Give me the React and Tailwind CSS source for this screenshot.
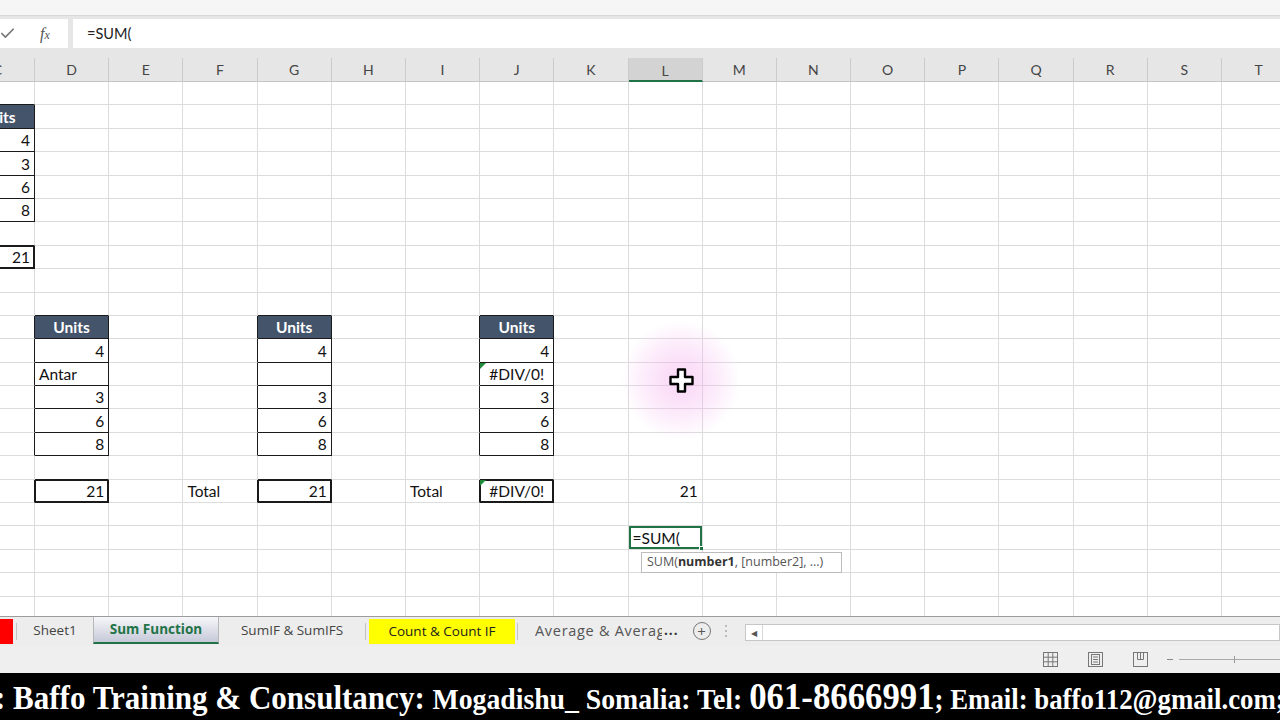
import { Check } from 'lucide-react'

const COLS = ['C', 'D', 'E', 'F', 'G', 'H', 'I', 'J', 'K', 'L', 'M', 'N', 'O', 'P', 'Q', 'R', 'S', 'T']
const ROW_COUNT = 23
const ACTIVE_COL = 'L'

// cell contents keyed "row-col"; row 0 is the first row visible under the column headers
const CELLS = {}
function put(r, col, v, k, a = 'r', flag = false) {
  CELLS[`${r}-${col}`] = { v, k, a, flag }
}
function unitsTable(col, startRow, values, total, totalAlign = 'r') {
  put(startRow, col, 'Units', 'hdr', 'c')
  values.forEach((v, i) => {
    const isText = typeof v === 'string' && isNaN(Number(v))
    put(startRow + 1 + i, col, v, 'box', v === '#DIV/0!' ? 'c' : isText ? 'l' : 'r', v === '#DIV/0!')
  })
  if (total != null) put(startRow + values.length + 2, col, total, 'tot', totalAlign, total === '#DIV/0!')
}

unitsTable('C', 1, ['4', '3', '6', '8'], '21')
unitsTable('D', 10, ['4', 'Antar', '3', '6', '8'], '21')
unitsTable('G', 10, ['4', '', '3', '6', '8'], '21')
unitsTable('J', 10, ['4', '#DIV/0!', '3', '6', '8'], '#DIV/0!', 'c')
put(17, 'F', 'Total', null, 'l')
put(17, 'I', 'Total', null, 'l')
put(17, 'L', '21', null, 'r')
put(19, 'L', '=SUM(', 'sel', 'l')

const TABS = [
  { name: 'Sheet1', w: 'w-[76px]' },
  { name: 'Sum Function', w: 'w-[126px]', active: true },
  { name: 'SumIF & SumIFS', w: 'w-[146px]' },
]

function cellAt(r, c) {
  if (c < 0 || c >= COLS.length) return null
  return CELLS[`${r}-${COLS[c]}`] || null
}

function isBoxed(r, c) {
  const k = cellAt(r, c)?.k
  return k === 'hdr' || k === 'box' || k === 'tot'
}

function Cell({ r, c }) {
  const cell = cellAt(r, c)
  const right = isBoxed(r, c) || isBoxed(r, c + 1)
  const bottom = isBoxed(r, c) || isBoxed(r + 1, c)
  const align = cell?.a === 'r' ? 'justify-end' : cell?.a === 'c' ? 'justify-center' : 'justify-start'
  const hdr = cell?.k === 'hdr'

  return (
    <div
      className={`relative flex h-[23.4px] w-[74.2px] shrink-0 items-end overflow-visible whitespace-nowrap border-b border-r px-[4px] pb-[1px] ${align} ${
        right ? 'border-r-[#1a1a1a]' : 'border-r-[#dcdcdc]'
      } ${bottom ? 'border-b-[#1a1a1a]' : 'border-b-[#dcdcdc]'} ${
        hdr ? 'bg-[#44546a] font-bold text-white' : 'bg-white text-[#111]'
      } ${cell?.k === 'tot' ? 'shadow-[inset_0_0_0_1px_#1a1a1a]' : ''} ${
        cell?.k === 'sel' ? 'shadow-[inset_0_0_0_2px_#217346]' : ''
      }`}
    >
      {cell?.flag && (
        <span className="absolute left-0 top-0 h-0 w-0 border-r-[6px] border-t-[6px] border-r-transparent border-t-[#1e8a3a]" />
      )}
      {cell?.v && <span className="leading-[20px]">{cell.v}</span>}
      {cell?.k === 'sel' && (
        <span className="absolute -bottom-[3px] -right-[3px] h-[6px] w-[6px] border border-white bg-[#217346]" />
      )}
    </div>
  )
}

function ColumnHeaders() {
  return (
    <div className="-ml-[39.2px] flex h-[24px] bg-[#e6e6e6] font-['Lato',sans-serif] text-[14px] text-[#444]">
      {COLS.map((col) => (
        <div
          key={col}
          className={`flex h-full w-[74.2px] shrink-0 items-center justify-center border-r border-r-[#cbcbcb] ${
            col === ACTIVE_COL ? 'border-b-2 border-b-[#217346] bg-[#d3d3d3] pt-[2px]' : 'border-b border-b-[#c4c4c4]'
          }`}
        >
          {col}
        </div>
      ))}
    </div>
  )
}

function FatCross() {
  return (
    <svg width="25" height="25" viewBox="0 0 25 25">
      <path
        d="M9 1.5h7v7.5h7.5v7h-7.5v7.5h-7v-7.5h-7.5v-7h7.5z"
        fill="#fff"
        stroke="#000"
        strokeWidth="2.4"
        strokeLinejoin="round"
      />
    </svg>
  )
}

function Grid() {
  return (
    <div className="relative h-[534px] overflow-hidden bg-white font-['Lato',sans-serif] text-[15.5px]">
      <div className="-ml-[39.2px] flex flex-col">
        {Array.from({ length: ROW_COUNT }, (_, r) => (
          <div key={r} className="flex">
            {COLS.map((col, c) => (
              <Cell key={col} r={r} c={c} />
            ))}
          </div>
        ))}
      </div>

      {/* function argument tooltip under the edited cell */}
      <div className="absolute left-[641px] top-[470px] flex h-[21px] w-[201px] items-center whitespace-nowrap border border-[#bcbcbc] bg-white pl-[5px] font-['Open_Sans',sans-serif] text-[12.5px] text-[#555]">
        SUM(<b className="font-bold text-[#333]">number1</b>, [number2], ...)
      </div>

      {/* pointer highlight */}
      <div className="absolute left-[621px] top-[238px] flex h-[120px] w-[120px] items-center justify-center rounded-full bg-[radial-gradient(circle,rgba(242,160,232,0.45)_0%,rgba(245,180,240,0.28)_40%,rgba(255,255,255,0)_70%)]">
        <FatCross />
      </div>
    </div>
  )
}

function SheetTabs() {
  return (
    <div className="flex h-[30px] items-start border-t border-[#9c9c9c] bg-[#ededed] font-['Open_Sans',sans-serif] text-[13.5px]">
      <div className="mt-[2px] h-[25px] w-[13px] bg-[#ff0000]" />
      <div className="ml-[3px] mt-[6px] h-[17px] w-px bg-[#c2c2c2]" />
      {TABS.map((t) =>
        t.active ? (
          <div
            key={t.name}
            className={`flex h-[27px] ${t.w} items-center justify-center border-x border-[#b8b8b8] border-b-2 border-b-[#217346] bg-[linear-gradient(#f7f7fa,#c5c9d8)] font-bold text-[#217346]`}
          >
            {t.name}
          </div>
        ) : (
          <div key={t.name} className={`flex h-[27px] ${t.w} items-center justify-center text-[#444]`}>
            {t.name}
          </div>
        )
      )}
      <div className="mt-[6px] h-[17px] w-px bg-[#c2c2c2]" />
      <div className="ml-[3px] mt-[2px] flex h-[25px] w-[146px] items-center justify-center bg-[#ffff00] text-[#222]">
        Count &amp; Count IF
      </div>
      <div className="ml-[2px] mt-[6px] h-[17px] w-px bg-[#c2c2c2]" />
      <div className="flex h-[27px] items-center pl-[17px] text-[#555]">
        <div className="w-[127px] shrink-0 overflow-hidden whitespace-nowrap text-[14.5px] tracking-[0.7px]">
          Average &amp; Averageifs
        </div>
        <span className="ml-[2px] font-bold tracking-[1px] text-[#333]">...</span>
      </div>
      <div className="ml-[14px] mt-[5px] flex h-[18px] w-[18px] items-center justify-center rounded-full border-[1.5px] border-[#777] text-[15px] leading-none text-[#555]">
        +
      </div>
      <div className="ml-[14px] mt-[5px] flex h-[18px] flex-col justify-center gap-[3px]">
        <span className="h-[2px] w-[2px] bg-[#bbb]" />
        <span className="h-[2px] w-[2px] bg-[#bbb]" />
        <span className="h-[2px] w-[2px] bg-[#bbb]" />
      </div>
      <div className="ml-[18px] mt-[7px] flex h-[17px] flex-1 border border-[#c6c6c6] bg-white">
        <div className="flex w-[17px] items-center justify-center border-r border-[#d8d8d8] text-[8px] text-[#555]">◀</div>
      </div>
    </div>
  )
}

function StatusBar() {
  return (
    <div className="flex h-[27px] items-center justify-end bg-[#efefef]">
      <div className="flex items-center gap-[30px]">
        <svg width="15" height="15" viewBox="0 0 15 15" fill="none" stroke="#777" strokeWidth="1">
          <rect x="0.5" y="0.5" width="14" height="14" />
          <path d="M5.2 0.5v14M9.8 0.5v14M0.5 5.2h14M0.5 9.8h14" />
        </svg>
        <svg width="15" height="15" viewBox="0 0 15 15" fill="none" stroke="#777" strokeWidth="1">
          <rect x="0.5" y="0.5" width="14" height="14" />
          <rect x="3.5" y="2.5" width="8" height="10" />
          <path d="M5 5h5M5 7.5h5M5 10h5" />
        </svg>
        <svg width="15" height="15" viewBox="0 0 15 15" fill="none" stroke="#777" strokeWidth="1">
          <rect x="0.5" y="0.5" width="14" height="14" />
          <path d="M4.5 0.5v7h6v-7M7.5 0.5v7" />
        </svg>
      </div>
      <div className="ml-[19px] flex w-[113px] items-center">
        <span className="h-px w-[6px] bg-[#888]" />
        <div className="relative ml-[6px] h-px flex-1 bg-[#aaa]">
          <span className="absolute left-[55px] -top-[3px] h-[7px] w-px bg-[#999]" />
        </div>
      </div>
    </div>
  )
}

export default function App() {
  return (
    <div className="h-[720px] w-[1280px] overflow-hidden bg-[#e9e9e9]">
      <div className="h-[16px] border-b border-[#d8d8d8] bg-[#f6f6f6]" />

      {/* formula bar */}
      <div className="flex h-[42px] bg-[#e6e6e6] pt-[3px]">
        <div className="flex h-[29px] w-[68px] items-center bg-white">
          <Check size={17} strokeWidth={2.4} className="-ml-[1px] text-[#777]" />
          <span className="ml-[24px] font-['Liberation_Serif',serif] text-[16px] italic text-[#555]">
            f<span className="text-[12px]">x</span>
          </span>
        </div>
        <div className="ml-[5px] flex h-[29px] flex-1 items-center bg-white pl-[14px] font-['Lato',sans-serif] text-[14.5px] text-[#222]">
          =SUM(
        </div>
      </div>

      <div className="overflow-hidden">
        <ColumnHeaders />
      </div>
      <Grid />
      <SheetTabs />
      <StatusBar />

      {/* channel banner burned into the recording */}
      <div className="h-[47px] overflow-hidden bg-black">
        <div className="-ml-[5px] w-max origin-left scale-x-[0.94] whitespace-nowrap pt-[3px] font-['Liberation_Serif',serif] font-bold leading-[42px] text-white">
          <span className="text-[33px]">: Baffo Training &amp; Consultancy: </span>
          <span className="text-[29.5px]">Mogadishu_ Somalia: Tel: </span>
          <span className="text-[37px]">061-8666991</span>
          <span className="text-[28.5px]">; Email: baffo112@gmail.com;</span>
        </div>
      </div>
    </div>
  )
}
